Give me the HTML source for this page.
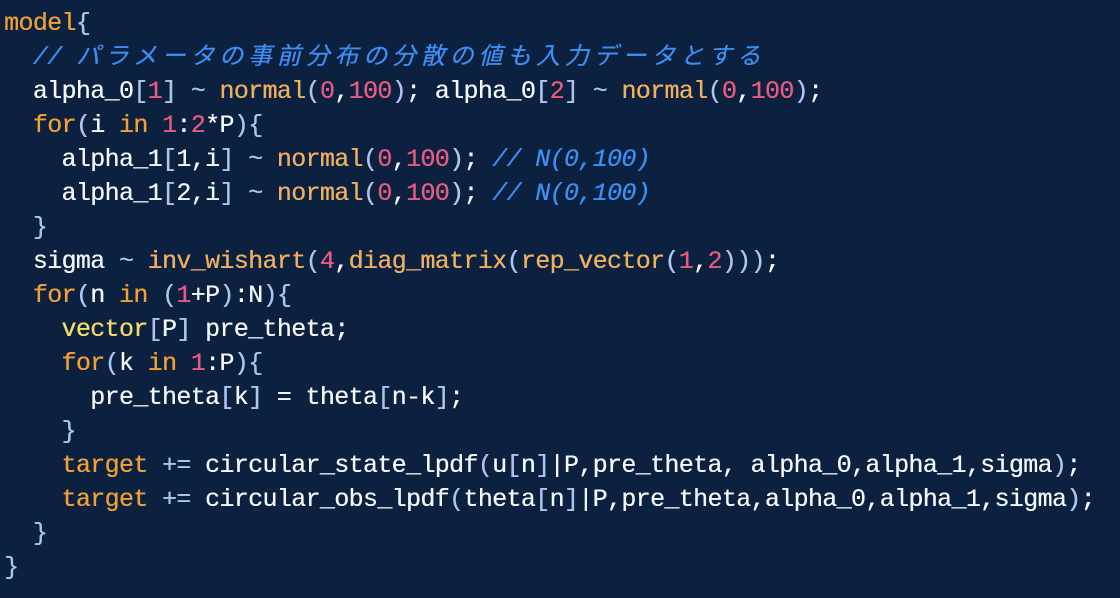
<!DOCTYPE html>
<html><head><meta charset="utf-8"><style>
html,body{margin:0;padding:0;background:#0c2140;width:1120px;height:598px;overflow:hidden}
pre{margin:0;position:absolute;left:4px;top:7px;font-family:"Liberation Mono","Noto Sans CJK JP",monospace;font-size:25px;letter-spacing:-0.65px;line-height:34px;color:#f4f6fa;white-space:pre;text-shadow:0.3px 0 0 currentColor}
.k{color:#f0a035}.f{color:#eeb060}.n{color:#e85a80}.p{color:#aec4ec}.c{color:#3c8ef2;font-style:italic}.y{color:#f2dc6a}
.j{letter-spacing:4.8px;font-size:24px;font-family:"Noto Sans CJK JP",sans-serif;font-style:italic;line-height:20px}
</style></head><body><pre><span class="k">model</span><span class="p">{</span>
  <span class="c">// <span class="j">パラメータの事前分布の分散の値も入力データとする</span></span>
  alpha_0<span class="p">[</span><span class="n">1</span><span class="p">]</span> <span class="p">~</span> <span class="f">normal</span><span class="p">(</span><span class="n">0</span>,<span class="n">100</span><span class="p">)</span>; alpha_0<span class="p">[</span><span class="n">2</span><span class="p">]</span> <span class="p">~</span> <span class="f">normal</span><span class="p">(</span><span class="n">0</span>,<span class="n">100</span><span class="p">)</span>;
  <span class="k">for</span><span class="p">(</span>i <span class="k">in</span> <span class="n">1</span>:<span class="n">2</span>*P<span class="p">){</span>
    alpha_1<span class="p">[</span>1,i<span class="p">]</span> <span class="p">~</span> <span class="f">normal</span><span class="p">(</span><span class="n">0</span>,<span class="n">100</span><span class="p">)</span>; <span class="c">// N(0,100)</span>
    alpha_1<span class="p">[</span>2,i<span class="p">]</span> <span class="p">~</span> <span class="f">normal</span><span class="p">(</span><span class="n">0</span>,<span class="n">100</span><span class="p">)</span>; <span class="c">// N(0,100)</span>
  <span class="p">}</span>
  sigma <span class="p">~</span> <span class="f">inv_wishart</span><span class="p">(</span><span class="n">4</span>,<span class="f">diag_matrix</span><span class="p">(</span><span class="f">rep_vector</span><span class="p">(</span><span class="n">1</span>,<span class="n">2</span><span class="p">)))</span>;
  <span class="k">for</span><span class="p">(</span>n <span class="k">in</span> <span class="p">(</span><span class="n">1</span>+P<span class="p">)</span>:N<span class="p">){</span>
    <span class="y">vector</span><span class="p">[</span>P<span class="p">]</span> pre_theta;
    <span class="k">for</span><span class="p">(</span>k <span class="k">in</span> <span class="n">1</span>:P<span class="p">){</span>
      pre_theta<span class="p">[</span>k<span class="p">]</span> = theta<span class="p">[</span>n-k<span class="p">]</span>;
    <span class="p">}</span>
    <span class="k">target</span> <span class="p">+=</span> circular_state_lpdf<span class="p">(</span>u<span class="p">[</span>n<span class="p">]</span>|P,pre_theta, alpha_0,alpha_1,sigma<span class="p">)</span>;
    <span class="k">target</span> <span class="p">+=</span> circular_obs_lpdf<span class="p">(</span>theta<span class="p">[</span>n<span class="p">]</span>|P,pre_theta,alpha_0,alpha_1,sigma<span class="p">)</span>;
  <span class="p">}</span>
<span class="p">}</span></pre></body></html>
